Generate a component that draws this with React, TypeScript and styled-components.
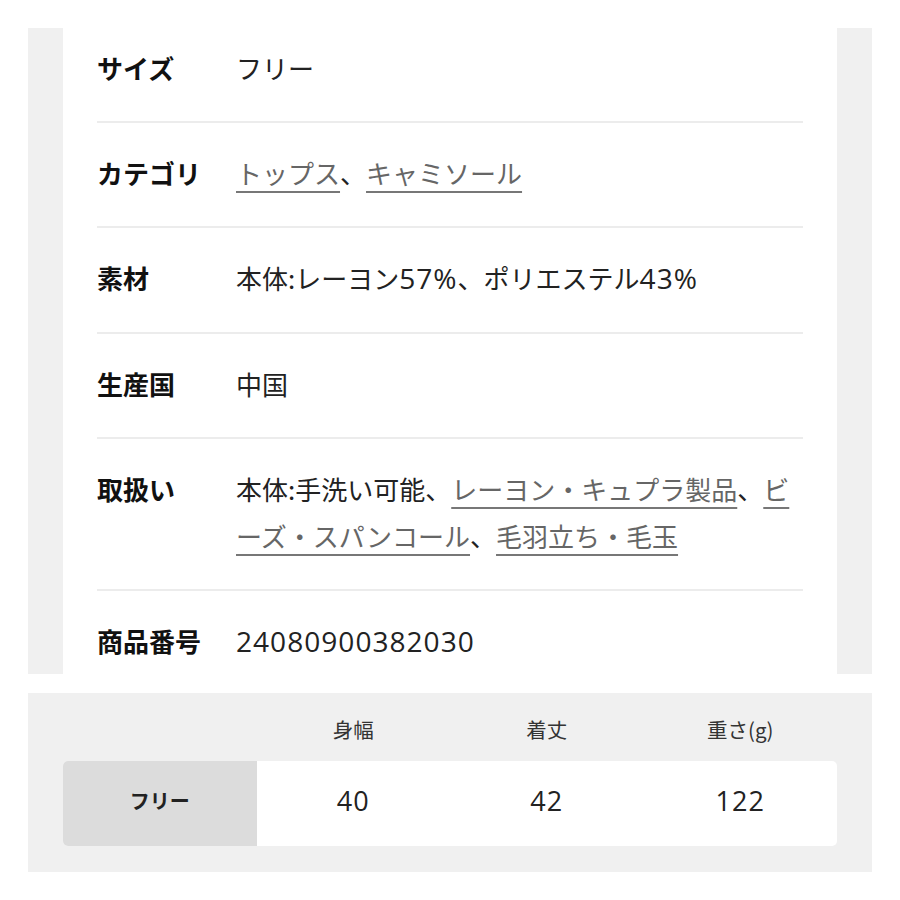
import React from 'react';
import styled, { createGlobalStyle } from 'styled-components';

const GlobalStyle = createGlobalStyle`
  body {
    margin: 0;
    background: #fff;
    font-family: "Noto Sans CJK JP", "Noto Sans", sans-serif;
    color: #222;
  }
`;

const Page = styled.div`
  width: 900px;
  height: 900px;
  overflow: hidden;
`;

const Top = styled.div`
  display: flex;
  margin: 0 28px;
`;

const SideBar = styled.div`
  width: 35px;
  flex: none;
  background: #f0f0f0;
  margin: 28px 0 19px;
`;

const Panel = styled.div`
  flex: 1;
  padding: 18px 34px 0;
`;

const Row = styled.div<{ $last?: boolean }>`
  display: grid;
  grid-template-columns: 139px 1fr;
  padding: 26px 0 ${p => (p.$last ? '28px' : '30px')};
  border-bottom: ${p => (p.$last ? 'none' : '2px solid #ececec')};
  font-size: 26px;
  line-height: 47px;
`;

const Label = styled.div`
  font-weight: 700;
  color: #111;
`;

const Value = styled.div`
  color: #222;
  line-break: normal;
`;

const Num = styled.span`
  font-family: "Open Sans", "Noto Sans CJK JP", sans-serif;
  font-size: 1.08em;
  letter-spacing: 1px;
`;

const Lnk = styled.a`
  color: #666;
  text-decoration: underline;
  text-decoration-color: #777;
  text-decoration-thickness: 2px;
  text-underline-offset: 7px;
`;

const SizeBox = styled.div`
  margin: 0 28px;
  background: #f0f0f0;
  padding: 0 35px 26px;
`;

const Grid = styled.div`
  display: grid;
  grid-template-columns: repeat(4, 1fr);
`;

const Head = styled.div`
  height: 68px;
  padding-top: 4px;
  box-sizing: border-box;
  display: flex;
  align-items: center;
  justify-content: center;
  font-size: 20.5px;
  color: #333;
`;

const DataRow = styled(Grid)`
  background: #fff;
  border-radius: 5px;
  overflow: hidden;
  height: 85px;
`;

const Cell = styled.div<{ $head?: boolean }>`
  display: flex;
  align-items: center;
  justify-content: center;
  padding-bottom: 6px;
  background: ${p => (p.$head ? '#dcdcdc' : 'transparent')};
  font-size: ${p => (p.$head ? '20px' : '25px')};
  font-weight: ${p => (p.$head ? 700 : 400)};
  color: #222;
`;

export default function App() {
  return (
    <Page>
      <GlobalStyle />
      <Top>
        <SideBar />
        <Panel>
          <Row>
            <Label>サイズ</Label>
            <Value>フリー</Value>
          </Row>
          <Row>
            <Label>カテゴリ</Label>
            <Value>
              <Lnk>トップス</Lnk>、<Lnk>キャミソール</Lnk>
            </Value>
          </Row>
          <Row>
            <Label>素材</Label>
            <Value>本体:レーヨン<Num>57%</Num>、ポリエステル<Num>43%</Num></Value>
          </Row>
          <Row>
            <Label>生産国</Label>
            <Value>中国</Value>
          </Row>
          <Row>
            <Label>取扱い</Label>
            <Value>
              本体:手洗い可能、<Lnk>レーヨン・キュプラ製品</Lnk>、<Lnk>ビーズ・スパンコール</Lnk>、<Lnk>毛羽立ち・毛玉</Lnk>
            </Value>
          </Row>
          <Row $last>
            <Label>商品番号</Label>
            <Value><Num>24080900382030</Num></Value>
          </Row>
        </Panel>
        <SideBar />
      </Top>
      <SizeBox>
        <Grid>
          <Head />
          <Head>身幅</Head>
          <Head>着丈</Head>
          <Head>重さ(g)</Head>
        </Grid>
        <DataRow>
          <Cell $head>フリー</Cell>
          <Cell><Num>40</Num></Cell>
          <Cell><Num>42</Num></Cell>
          <Cell><Num>122</Num></Cell>
        </DataRow>
      </SizeBox>
    </Page>
  );
}
